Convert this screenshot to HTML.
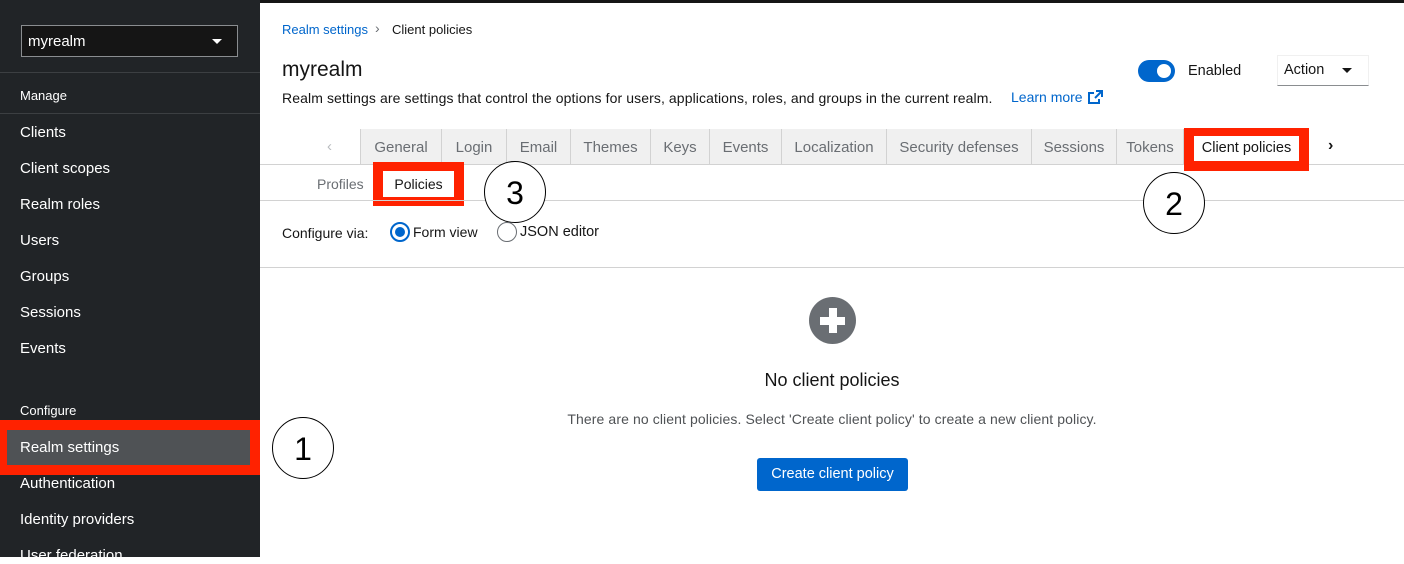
<!DOCTYPE html>
<html><head><style>
*{box-sizing:border-box;margin:0;padding:0}
body{width:1404px;height:557px;overflow:hidden;background:#fff;font-family:"Liberation Sans",sans-serif;position:relative;color:#151515}
.abs{position:absolute}
#side{left:0;top:0;width:260px;height:557px;background:#212427;color:#fff}
.nav{position:absolute;left:20px;font-size:15px;color:#fff}
.sec{position:absolute;left:20px;font-size:13px;color:#fff}
.tab{position:absolute;top:129px;height:35px;background:#f0f0f0;border-left:1px solid #d2d2d2;font-size:15px;color:#6a6e73;text-align:center;line-height:37px}
.circ{position:absolute;width:62px;height:62px;border:1px solid #000;border-radius:50%;background:#fff;text-align:center;line-height:62px;font-size:32px;color:#000}
</style></head><body>
<div class="abs" style="left:0;top:0;width:1404px;height:3px;background:#151515"></div>
<div id="side" class="abs">
  <div class="abs" style="left:21px;top:25px;width:217px;height:32px;border:1px solid #8a8d90;background:#151515"></div>
  <div class="abs" style="left:28px;top:33px;font-size:15px">myrealm</div>
  <div class="abs" style="left:212px;top:39px;width:0;height:0;border-left:5px solid transparent;border-right:5px solid transparent;border-top:5px solid #fff"></div>
  <div class="abs" style="left:0;top:72px;width:260px;height:1px;background:#3c3f42"></div>
  <div class="sec" style="top:88px">Manage</div>
  <div class="abs" style="left:0;top:113px;width:260px;height:1px;background:#3c3f42"></div>
  <div class="nav" style="top:124px">Clients</div>
  <div class="nav" style="top:160px">Client scopes</div>
  <div class="nav" style="top:196px">Realm roles</div>
  <div class="nav" style="top:232px">Users</div>
  <div class="nav" style="top:268px">Groups</div>
  <div class="nav" style="top:304px">Sessions</div>
  <div class="nav" style="top:340px">Events</div>
  <div class="sec" style="top:403px">Configure</div>
  <div class="abs" style="left:0;top:420px;width:260px;height:55px;background:#ff2200"></div>
  <div class="abs" style="left:7px;top:430px;width:243px;height:35px;background:#4f5255"></div>
  <div class="nav" style="top:439px">Realm settings</div>
  <div class="nav" style="top:475px">Authentication</div>
  <div class="nav" style="top:511px">Identity providers</div>
  <div class="nav" style="top:547px">User federation</div>
</div>
<div class="abs" style="left:282px;top:22px;font-size:13px;color:#0066cc">Realm settings</div>
<div class="abs" style="left:375px;top:20px;font-size:14px;color:#6a6e73">›</div>
<div class="abs" style="left:392px;top:22px;font-size:13px">Client policies</div>
<div class="abs" style="left:282px;top:58px;font-size:21px">myrealm</div>
<div class="abs" style="left:282px;top:90px;font-size:14px;letter-spacing:0.1px">Realm settings are settings that control the options for users, applications, roles, and groups in the current realm.</div>
<div class="abs" style="left:1011px;top:89px;font-size:14px;color:#0066cc">Learn more</div>
<svg class="abs" style="left:1088px;top:90px" width="15" height="14" viewBox="0 0 15 14"><path d="M8 1h6v6M14 1L7 8M11 9v4H1V3h5" fill="none" stroke="#0066cc" stroke-width="2"/></svg>
<div class="abs" style="left:1138px;top:60px;width:37px;height:22px;border-radius:11px;background:#0066cc"></div>
<div class="abs" style="left:1157px;top:64px;width:14px;height:14px;border-radius:50%;background:#fff"></div>
<div class="abs" style="left:1188px;top:63px;font-size:14.5px">Enabled</div>
<div class="abs" style="left:1277px;top:55px;width:92px;height:31px;border:1px solid #f0f0f0;border-bottom-color:#8a8d90"></div>
<div class="abs" style="left:1284px;top:62px;font-size:14.5px">Action</div>
<div class="abs" style="left:1342px;top:68px;border-left:5px solid transparent;border-right:5px solid transparent;border-top:5px solid #151515"></div>
<div class="abs" style="left:327px;top:138px;font-size:15px;color:#b8bbbe">‹</div>
<div class="abs" style="left:260px;top:164px;width:1144px;height:1px;background:#d2d2d2"></div>
<div class="tab" style="left:360px;width:81px">General</div>
<div class="tab" style="left:441px;width:65px">Login</div>
<div class="tab" style="left:506px;width:64px">Email</div>
<div class="tab" style="left:570px;width:80px">Themes</div>
<div class="tab" style="left:650px;width:59px">Keys</div>
<div class="tab" style="left:709px;width:72px">Events</div>
<div class="tab" style="left:781px;width:105px">Localization</div>
<div class="tab" style="left:886px;width:145px">Security defenses</div>
<div class="tab" style="left:1031px;width:85px">Sessions</div>
<div class="tab" style="left:1116px;width:68px;border-right:1px solid #d2d2d2">Tokens</div>
<div class="abs" style="left:1184px;top:128px;width:125px;height:43px;background:#ff2200"></div>
<div class="abs" style="left:1194px;top:136px;width:105px;height:25px;background:#fff;font-size:14.5px;text-align:center;line-height:25px">Client policies</div>
<div class="abs" style="left:1328px;top:137px;font-size:16px;font-weight:bold">›</div>
<div class="abs" style="left:317px;top:176px;font-size:14px;color:#6a6e73">Profiles</div>
<div class="abs" style="left:373px;top:162px;width:91px;height:44px;background:#ff2200"></div>
<div class="abs" style="left:383px;top:171px;width:71px;height:26px;background:#fff;font-size:14px;text-align:center;line-height:26px">Policies</div>
<div class="abs" style="left:260px;top:200px;width:1144px;height:1px;background:#d2d2d2"></div>
<div class="circ" style="left:484px;top:161px">3</div>
<div class="circ" style="left:1143px;top:172px">2</div>
<div class="circ" style="left:272px;top:417px">1</div>
<div class="abs" style="left:282px;top:225px;font-size:14px">Configure via:</div>
<div class="abs" style="left:390px;top:222px;width:20px;height:20px;border-radius:50%;border:2px solid #0066cc"></div>
<div class="abs" style="left:395px;top:227px;width:10px;height:10px;border-radius:50%;background:#0066cc"></div>
<div class="abs" style="left:413px;top:224px;font-size:14px">Form view</div>
<div class="abs" style="left:497px;top:222px;width:20px;height:20px;border-radius:50%;border:1px solid #6a6e73"></div>
<div class="abs" style="left:520px;top:224px;font-size:14.5px">JSON editor</div>
<div class="abs" style="left:260px;top:267px;width:1144px;height:1px;background:#d2d2d2"></div>
<div class="abs" style="left:809px;top:297px;width:47px;height:47px;border-radius:50%;background:#6a6e73"></div>
<div class="abs" style="left:829px;top:308px;width:8px;height:25px;background:#fff"></div>
<div class="abs" style="left:820px;top:317px;width:25px;height:8px;background:#fff"></div>
<div class="abs" style="left:260px;top:370px;width:1144px;text-align:center;font-size:18px">No client policies</div>
<div class="abs" style="left:260px;top:411px;width:1144px;text-align:center;font-size:14px;color:#4f5255;letter-spacing:0.1px">There are no client policies. Select 'Create client policy' to create a new client policy.</div>
<div class="abs" style="left:757px;top:458px;width:151px;height:33px;background:#0066cc;border-radius:3px;color:#fff;font-size:14.5px;text-align:center;line-height:33px">Create client policy</div>
</body></html>
